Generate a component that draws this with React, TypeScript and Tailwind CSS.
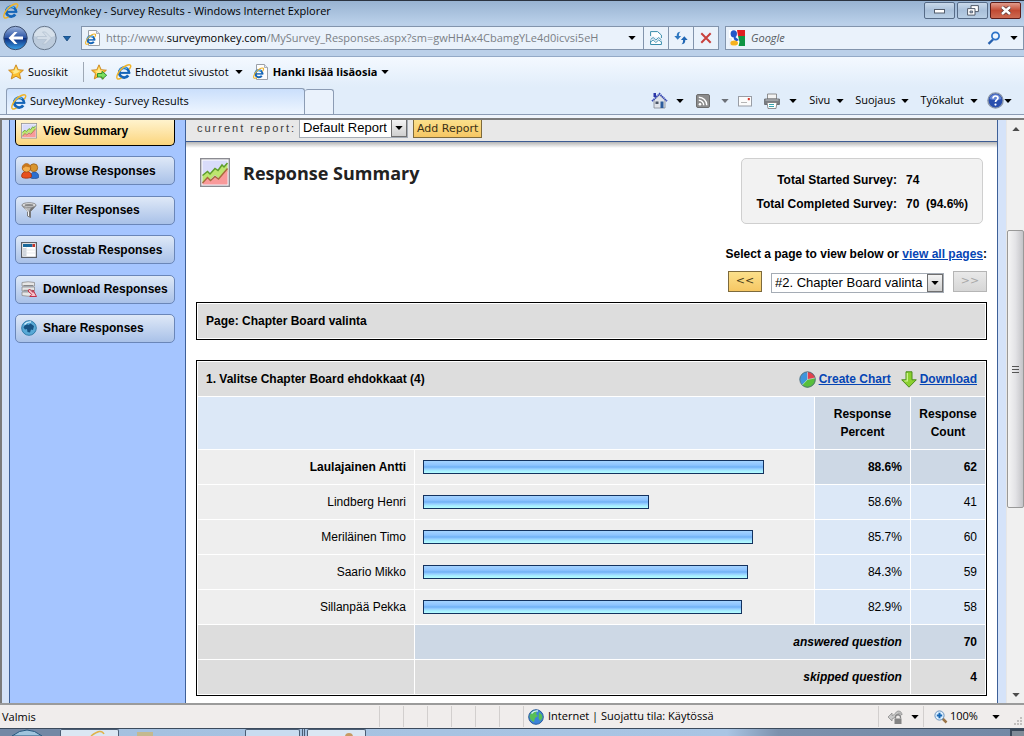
import React from "react";

const results = [
  { name: "Laulajainen Antti", percent: 88.6, count: 62, top: true },
  { name: "Lindberg Henri", percent: 58.6, count: 41, top: false },
  { name: "Meriläinen Timo", percent: 85.7, count: 60, top: false },
  { name: "Saario Mikko", percent: 84.3, count: 59, top: false },
  { name: "Sillanpää Pekka", percent: 82.9, count: 58, top: false },
];

function Caret({ className = "text-black" }: { className?: string }) {
  return (
    <svg width="8" height="4" viewBox="0 0 8 4" className={"shrink-0 " + className} aria-hidden="true">
      <path d="M0.3 0h7.4L4 4z" fill="currentColor" />
    </svg>
  );
}

function IeMark() {
  return (
    <>
      <path d="M13 9.2A4.9 4.9 0 1 0 12.2 11.4" fill="none" stroke="#1565b8" strokeWidth="2.8" />
      <path d="M4 8.9h10.2" stroke="#1565b8" strokeWidth="2" />
      <path d="M3.4 7.4A4.9 4.9 0 0 1 11 4.6" fill="none" stroke="#5cbcf2" strokeWidth="1.4" />
      <path d="M13.2 5.4c1.500-2 2-3.700 1.100-4.300C12.700 0 8.600 1.900 5.200 5.200c-3.600 3.600-5.300 8.100-3.900 9.400.8.700 2.500.3 4.200-.7" fill="none" stroke="#f0b429" strokeWidth="1.4" />
    </>
  );
}

function IeIcon() {
  return (
    <svg width="16" height="16" viewBox="0 0 16 16" className="shrink-0" aria-hidden="true">
      <IeMark />
    </svg>
  );
}

function IePageIcon() {
  return (
    <svg width="16" height="16" viewBox="0 0 16 16" className="shrink-0" aria-hidden="true">
      <path d="M3.5.5h8l3 3v12h-11z" fill="#fdfdfd" stroke="#9aa0a8" />
      <path d="M11.5.5v3h3" fill="#dfe5ec" stroke="#9aa0a8" strokeWidth=".8" />
      <g transform="translate(0 3.5) scale(.72)">
        <IeMark />
      </g>
    </svg>
  );
}

function StarIcon({ add = false }: { add?: boolean }) {
  return (
    <svg width="16" height="16" viewBox="0 0 16 16" className="shrink-0" aria-hidden="true">
      <path d="M8 .8l2.2 4.9 5.2.5-3.9 3.5 1.2 5.2L8 12.2l-4.700 2.700 1.200-5.200L.6 6.200l5.200-.5z" fill="#fbc02f" stroke="#c8831c" strokeWidth=".9" />
      <path d="M8 2.800l1.300 3.500 3 .5-2.600 2L8 9.500 5 10l.7-2-2.400-1.300 3.200-.2z" fill="#ffe88a" />
      {add && <path d="M6.500 9.500h4.500V7.300l4.700 4-4.700 4V13H6.500z" fill="#7be05e" stroke="#27882a" strokeWidth=".9" />}
    </svg>
  );
}

function ChartIcon({ size }: { size: number }) {
  return (
    <svg width={size} height={size} viewBox="0 0 30 30" className="shrink-0" aria-hidden="true">
      <rect x=".7" y=".7" width="28.6" height="27.6" fill="#fff" stroke="#8b8b92" strokeWidth="1.4" />
      <rect x="2.5" y="2.5" width="25" height="24" fill="#d9dcfa" />
      <path d="M2.5 17.5l5-4 2.500 2.500 5-5.500 3 2 4-5.500 2 2 3.500-4v9L18.500 20 15 17l-5 4.500-2.500-2-5 6z" fill="#bde56f" />
      <path d="M2.500 25l5-5.500 3 3 4.500-4 3.500 2.500 9-10.500v16h-25z" fill="#f99a9a" />
      <path d="M2.500 17.500l5-4 2.500 2.500 5-5.500 3 2 4-5.500 2 2 3.500-4" fill="none" stroke="#5f9d2b" strokeWidth="1.5" />
      <path d="M2.500 25l5-5.500 3 3 4.500-4 3.500 2.500 9-10.500" fill="none" stroke="#a66a3c" strokeWidth="1.4" />
    </svg>
  );
}

function PeopleIcon() {
  return (
    <svg width="18" height="16" viewBox="0 0 18 16" className="shrink-0" aria-hidden="true">
      <path d="M9.500 15c0-4 1-6 4-6s4.300 2.500 4.300 5c0 1.500-5 2-8.300 1z" fill="#2c6fd0" stroke="#1c4a94" strokeWidth=".7" />
      <circle cx="12.8" cy="4.7" r="3.9" fill="#d9962f" stroke="#99601a" strokeWidth=".8" />
      <path d="M.6 13.500C.6 10 2.500 8.500 5.600 8.500s5 1.500 5 5c0 2-10 2.500-10 0z" fill="#e8501f" stroke="#9f2e0c" strokeWidth=".8" />
      <circle cx="5.5" cy="4.9" r="4.2" fill="#f4b04e" stroke="#a65c16" strokeWidth=".9" />
      <path d="M1.400 5C1.500 1.500 4 .4 6 .7c2.500.3 3.700 2 3.700 4C8 4 6 3.600 4.500 3.400 3.500 4.500 2.500 5 1.400 5z" fill="#c8781e" />
    </svg>
  );
}

function FunnelIcon() {
  return (
    <svg width="16" height="16" viewBox="0 0 16 16" className="shrink-0" aria-hidden="true">
      <path d="M1 3.500l5.500 6V14l3 1.500v-6l5.500-6z" fill="#b5b5b5" stroke="#6b6b6b" strokeWidth=".8" />
      <path d="M9.500 15v-5.500l5-5.500-4.500 1.500-2 4v5z" fill="#747474" />
      <path d="M4 6.500L7.500 10v4" fill="none" stroke="#f4f4f4" />
      <ellipse cx="8" cy="3" rx="7" ry="2.3" fill="#e4e4e4" stroke="#7b7b7b" strokeWidth=".8" />
      <ellipse cx="8" cy="3.2" rx="4.5" ry="1.1" fill="#888" />
    </svg>
  );
}

function CrosstabIcon() {
  return (
    <svg width="16" height="16" viewBox="0 0 16 16" className="shrink-0" aria-hidden="true">
      <rect x=".6" y=".6" width="14.8" height="14.8" fill="#fff" stroke="#5b6068" strokeWidth="1.2" />
      <path d="M2 2h9.500v3H2z" fill="#1b6a9c" />
      <path d="M11.500 2H14v3h-2.500z" fill="#c5372c" />
      <path d="M2 6h3v8H2z" fill="#cfd5dc" />
      <path d="M5.500 5.500v8.500M2 8h12M2 11h12" stroke="#dde1e5" strokeWidth=".7" />
    </svg>
  );
}

function DatabaseIcon() {
  return (
    <svg width="16" height="16" viewBox="0 0 16 16" className="shrink-0" aria-hidden="true">
      <path d="M1 1.500Q7 0 13.500 1.500v3.500H1zM1 6h12.500v4H1zM1 11h12.500v3.500Q7 16 1 14.500z" fill="#e6e6e6" stroke="#8e8e8e" strokeWidth=".8" />
      <path d="M2.500 4.500H12M2.500 9.300H12" stroke="#777" strokeWidth=".8" />
      <path d="M8.500 8l3.500 3.500V9l3.500 6.500H8.800l2-2L7 10z" fill="#f7c4cc" stroke="#c01f3a" strokeWidth=".9" />
    </svg>
  );
}

function GlobeIcon({ green = false }: { green?: boolean }) {
  return (
    <svg width="16" height="16" viewBox="0 0 16 16" className="shrink-0" aria-hidden="true">
      <circle cx="8" cy="8" r="7.3" fill={green ? "#3b83d8" : "#58a9d6"} stroke={green ? "#2a5c9a" : "#327ca9"} />
      {green ? (
        <path d="M3 4c2-2.500 5-3 6-2L8 5l2 2-3 2-1 4C3 12 1.500 9 1.500 7zM11 3l3 3 .5 3-2.500 3-1.500-3z" fill="#57bf57" />
      ) : (
        <path d="M2.500 7.500c1-2.500 3.500-3.500 5-2.500l2-1.500L13 6l-1 4-2-.5-1 3-2.500-.5-.5-3-2 .5z" fill="#185383" />
      )}
      <path d="M3.500 4.500Q6 1.500 10 2" fill="none" stroke="#d5f0ff" strokeWidth="1.3" />
    </svg>
  );
}

function HomeIcon() {
  return (
    <svg width="17" height="17" viewBox="0 0 17 17" className="shrink-0" aria-hidden="true">
      <path d="M2.500 1h2.500v4H2.500z" fill="#2a35a8" />
      <path d="M3 8l5.500-5L14 8v8H3z" fill="#dfe3ea" stroke="#80858f" strokeWidth=".8" />
      <path d="M1 9.200L8.500 1.800 16 9.200" fill="none" stroke="#3747b4" strokeWidth="1.7" strokeDasharray="1.5 .5" />
      <path d="M9.500 9.500h3V16h-3z" fill="#2d5c9d" />
      <path d="M4.500 9.500h3V12h-3z" fill="#4b5566" />
    </svg>
  );
}

function RssIcon() {
  return (
    <svg width="14" height="14" viewBox="0 0 14 14" className="shrink-0" aria-hidden="true">
      <rect x=".5" y=".5" width="13" height="13" rx="1.5" fill="#8c8c8c" stroke="#6d6d6d" />
      <circle cx="4" cy="10.2" r="1.3" fill="#fff" />
      <path d="M2.800 6.300a4.900 4.900 0 0 1 4.900 4.900M2.800 3.200a8 8 0 0 1 8 8" fill="none" stroke="#fff" strokeWidth="1.4" />
    </svg>
  );
}

function MailIcon() {
  return (
    <svg width="14" height="12" viewBox="0 0 14 12" className="shrink-0" aria-hidden="true">
      <rect x=".5" y="1.5" width="13" height="9.5" fill="#fbfbfb" stroke="#999da5" />
      <path d="M9.800 3h2v2.200h-2z" fill="#d8362b" />
      <path d="M3 7.500h6" stroke="#b5b5b5" />
    </svg>
  );
}

function PrinterIcon() {
  return (
    <svg width="16" height="16" viewBox="0 0 16 16" className="shrink-0" aria-hidden="true">
      <path d="M3.500 1h9v5h-9z" fill="#f3f3f3" stroke="#777" strokeWidth=".8" />
      <path d="M.6 6h14.800v5.500H.6z" fill="#7b7e83" stroke="#5a5d62" strokeWidth=".8" />
      <path d="M3 9.500h10l-1 6H4z" fill="#fff" stroke="#777" strokeWidth=".8" />
      <path d="M5 11.500h5M5 13.500h5" stroke="#39a4b0" />
      <path d="M1.500 7h13" stroke="#c4c7cb" />
    </svg>
  );
}

function HelpIcon() {
  return (
    <svg width="17" height="17" viewBox="0 0 17 17" className="shrink-0" aria-hidden="true">
      <circle cx="8.5" cy="8.5" r="7.6" fill="#2a4fae" stroke="#8c98ab" strokeWidth="1.4" />
      <path d="M2.500 7a6.200 6.200 0 0 1 12 0Q8 9 2.500 7z" fill="#6384d4" />
      <path d="M6 6.500c0-3.300 5-3.200 5-.4 0 1.900-2.500 1.800-2.500 4" fill="none" stroke="#fff" strokeWidth="1.7" />
      <circle cx="8.5" cy="12.6" r="1.1" fill="#fff" />
    </svg>
  );
}

function GoogleIcon() {
  return (
    <svg width="16" height="16" viewBox="0 0 16 16" className="shrink-0" aria-hidden="true">
      <path d="M0 0h16v16H0z" fill="#fff" />
      <path d="M8 0h8v6H9z" fill="#e01f22" />
      <path d="M9 6h7v10H9.500l1-4z" fill="#109544" />
      <path d="M0 8h3v8H0z" fill="#e8ecf4" />
      <ellipse cx="4.8" cy="3.8" rx="3.2" ry="3.6" fill="#2456c8" />
      <path d="M5 7c3 0 3 2 5 3l-2 1C6 11 4 9 5 7z" fill="#2456c8" />
      <ellipse cx="5.2" cy="13" rx="3.8" ry="2.6" fill="#f5b21f" />
    </svg>
  );
}

function PieIcon() {
  return (
    <svg width="17" height="17" viewBox="0 0 17 17" className="shrink-0" aria-hidden="true">
      <circle cx="8.5" cy="8.5" r="7.8" fill="#3f95dc" />
      <path d="M8.500 8.500V.7a7.800 7.800 0 0 1 7.800 6.300z" fill="#e2414d" />
      <path d="M8.500 8.500L16.300 7A7.800 7.800 0 0 1 3 14z" fill="#57bf3b" />
      <circle cx="8.5" cy="8.5" r="7.7" fill="none" stroke="#54707b" strokeWidth=".9" />
      <path d="M8.500 8.500V1M8.500 8.500L16 7M8.500 8.500L3.300 14" stroke="#e8f4f4" strokeWidth=".5" />
    </svg>
  );
}

function DownloadIcon() {
  return (
    <svg width="16" height="17" viewBox="0 0 16 17" className="shrink-0" aria-hidden="true">
      <path d="M5 .8h6v8h4.300L8 16.200.7 8.800H5z" fill="#8bd02f" stroke="#4b8d1b" />
      <path d="M6.300 2v8H3.500" fill="none" stroke="#d3f596" strokeWidth="1.2" />
    </svg>
  );
}

function SideButton({ icon, label }: { icon: React.ReactNode; label: string }) {
  return (
    <button className="flex h-[29px] w-full items-center gap-[6px] rounded-[5px] border border-[#6a86b8] bg-gradient-to-b from-[#dfe9f7] to-[#a9c1e8] px-[5px] text-left text-[12px] font-bold text-black">
      {icon}
      {label}
    </button>
  );
}

function MenuButton({ label }: { label: string }) {
  return (
    <button className="flex items-center gap-[6px]">
      {label}
      <Caret />
    </button>
  );
}

function SelectBox({ id, label, value }: { id: string; label: string; value: string }) {
  return (
    <span className="relative inline-flex">
      <select
        id={id}
        aria-label={label}
        defaultValue={value}
        className="h-5 appearance-none border border-[#a5acb5] bg-white pr-5 pl-[3px] font-['Liberation_Sans',sans-serif] text-[13px] leading-[18px] text-black"
      >
        <option>{value}</option>
      </select>
      <span className="pointer-events-none absolute top-px right-px bottom-px flex w-4 items-center justify-center border border-[#6f6f6f] bg-gradient-to-b from-[#f4f4f4] to-[#cfcfcf]">
        <Caret />
      </span>
    </span>
  );
}

function TitleBar() {
  return (
    <header className="flex h-6 items-start border-t border-[#2b3340] bg-gradient-to-b from-[#98b3d2] to-[#bbd1ea] pr-[3px] pl-[3px]">
      <div className="flex h-5 flex-1 items-center gap-[7px]">
        <IeIcon />
        <h1 className="text-[11px]">SurveyMonkey - Survey Results - Windows Internet Explorer</h1>
      </div>
      <div className="flex gap-[2px] pt-px">
        <button aria-label="Minimize" className="flex h-[17px] w-[31px] items-center justify-center rounded-[2px] border border-[#566b87] bg-gradient-to-b from-[#c9d9ea] via-[#a9c0da] to-[#b9cfe5]">
          <svg width="12" height="6" viewBox="0 0 12 6"><rect x=".5" y="1.5" width="10" height="3.5" fill="#fff" stroke="#525c6b" /></svg>
        </button>
        <button aria-label="Restore" className="flex h-[17px] w-[31px] items-center justify-center rounded-[2px] border border-[#566b87] bg-gradient-to-b from-[#c9d9ea] via-[#a9c0da] to-[#b9cfe5]">
          <svg width="12" height="11" viewBox="0 0 12 11">
            <path d="M4 .6h7.400v6H4z" fill="#fff" stroke="#525c6b" />
            <path d="M.6 3.600h7.400v6.500H.6z" fill="#fff" stroke="#525c6b" />
            <path d="M3 6h2.600v1.800H3z" fill="#a9c0da" stroke="#525c6b" strokeWidth=".9" />
          </svg>
        </button>
        <button aria-label="Close" className="flex h-[17px] w-[31px] items-center justify-center rounded-[2px] border border-[#5d1d1a] bg-gradient-to-b from-[#e19b8c] via-[#c14a33] to-[#cd6a52]">
          <svg width="12" height="9" viewBox="0 0 12 9">
            <path d="M2 1l8 7M10 1L2 8" stroke="#5a3434" strokeWidth="4" />
            <path d="M2 1l8 7M10 1L2 8" stroke="#fff" strokeWidth="2.5" />
          </svg>
        </button>
      </div>
    </header>
  );
}

function NavBar() {
  return (
    <div className="flex h-8 items-start bg-[#bbd0e9] pl-[3px] text-[11px]">
      <div className="flex h-7 w-[78px] shrink-0 items-center">
        <button aria-label="Back">
          <svg width="26" height="26" viewBox="0 0 26 26">
            <defs>
              <linearGradient id="back" x1="0" y1="0" x2="0" y2="1">
                <stop offset="0" stopColor="#9db4dc" />
                <stop offset=".48" stopColor="#2c55a5" />
                <stop offset=".52" stopColor="#0e2f80" />
                <stop offset="1" stopColor="#3aa2ea" />
              </linearGradient>
            </defs>
            <circle cx="12.5" cy="13" r="11.7" fill="url(#back)" stroke="#3b4d6d" />
            <path d="M5.500 13l6-6h3l-4 4.500H20v3h-9.500l4 4.500h-3z" fill="#fff" />
          </svg>
        </button>
        <button aria-label="Forward" className="ml-[3px]">
          <svg width="26" height="26" viewBox="0 0 26 26">
            <circle cx="12.5" cy="13" r="11.7" fill="#bccbdc" stroke="#69798d" />
            <path d="M2 11a10.700 10.700 0 0 1 21 0q-10 4-21 0z" fill="#d6e0ea" />
            <path d="M19.500 13l-6-6h-3l4 4.500H5v3h9.500l-4 4.500h3z" fill="#d3dde8" stroke="#b0bfcf" strokeWidth=".7" />
          </svg>
        </button>
        <button aria-label="Recent pages" className="ml-[5px]">
          <svg width="8" height="5" viewBox="0 0 8 5"><path d="M.3 0h7.400L4 5z" fill="#1d63a8" stroke="#123f70" strokeWidth=".7" /></svg>
        </button>
      </div>
      <div className="mt-[2px] flex h-6 min-w-0 flex-1 items-center border border-[#8294ac] bg-[#eaf2fb] pl-[3px]">
        <IePageIcon />
        <div
          role="textbox"
          aria-label="Address"
          contentEditable
          suppressContentEditableWarning
          className="ml-[5px] min-w-0 flex-1 overflow-hidden whitespace-nowrap text-[#7a7f86]"
        >
          http://www.<span className="text-black">surveymonkey.com</span>/MySurvey_Responses.aspx?sm=gwHHAx4CbamgYLe4d0icvsi5eH
        </div>
        <button aria-label="Address history" className="flex h-full w-[22px] items-center justify-center"><Caret /></button>
        <button aria-label="Compatibility view" className="flex h-full w-[25px] items-center justify-center border-l border-[#8294ac]">
          <svg width="12" height="14" viewBox="0 0 12 14">
            <path d="M.6 5V.6h7l3.800 3.500V7M.6 9.500v4h10.800v-3" fill="#fff" stroke="#398cab" />
            <path d="M.6 8.500l2.500-2 2.800 2.500 2.800-2.500 2.700 2.500M.6 11l2.500-2 2.800 2.500 2.800-2.500 2.700 2" fill="none" stroke="#398cab" strokeWidth=".9" />
          </svg>
        </button>
        <button aria-label="Refresh" className="flex h-full w-[25px] items-center justify-center border-l border-[#8294ac]">
          <svg width="14" height="14" viewBox="0 0 14 14">
            <path d="M6.500.8C4 .8 2.700 2 2.700 5H.3L3.700 8.700 7.100 5H4.900c0-2 .3-3.200 1.600-4.200z" fill="#2f78c0" />
            <path d="M7.500 13.200c2.500 0 3.800-1.200 3.800-4.200h2.400l-3.400-3.700L6.900 9h2.200c0 2-.3 3.200-1.600 4.200z" fill="#1f66b4" />
          </svg>
        </button>
        <button aria-label="Stop" className="flex h-full w-[25px] items-center justify-center border-l border-[#8294ac]">
          <svg width="12" height="12" viewBox="0 0 12 12"><path d="M1.300 1.300l9.400 9.400M10.700 1.300l-9.400 9.400" stroke="#c8403c" strokeWidth="2" /></svg>
        </button>
      </div>
      <div className="mt-[2px] ml-[6px] flex h-6 w-[299px] shrink-0 items-center border border-[#8294ac] bg-[#eaf2fb] pr-[5px] pl-[3px]">
        <GoogleIcon />
        <input aria-label="Search" placeholder="Google" className="ml-[6px] min-w-0 flex-1 bg-transparent italic outline-none placeholder:text-[#555a61]" />
        <button aria-label="Run search">
          <svg width="14" height="14" viewBox="0 0 14 14">
            <path d="M6 8.500L1.500 12.800" stroke="#2660ae" strokeWidth="2.3" />
            <circle cx="8.5" cy="5" r="3.6" fill="#eef6ff" stroke="#2b72c8" strokeWidth="1.7" />
          </svg>
        </button>
        <button aria-label="Search options" className="ml-[9px]"><Caret /></button>
      </div>
    </div>
  );
}

function FavoritesBar() {
  return (
    <nav className="flex h-[31px] items-center border-t border-[#93a9c6] bg-gradient-to-b from-[#f4f9ff] to-[#e1edfa] pl-2 text-[11px]">
      <button className="flex items-center gap-1"><StarIcon />Suosikit</button>
      <span className="ml-[15px] h-5 w-px bg-[#9ea8b5]" />
      <button aria-label="Add to favorites" className="ml-[7px]"><StarIcon add /></button>
      <button className="ml-[9px] flex items-center gap-[3px]"><IeIcon />Ehdotetut sivustot<Caret className="ml-[3px] text-black" /></button>
      <button className="ml-[10px] flex items-center gap-1 font-bold"><IePageIcon />Hanki lisää lisäosia<Caret className="text-black" /></button>
    </nav>
  );
}

function TabBar() {
  return (
    <div className="flex h-8 flex-col bg-[#e1edfa] text-[11px]">
      <div className="flex flex-1 items-stretch border-b border-[#8c9cb4] pl-[6px]">
        <div className="mt-px flex w-[299px] items-center gap-[3px] rounded-t-[3px] border border-b-0 border-[#8c9cb4] bg-gradient-to-b from-[#cadffb] to-[#eff6ff] pl-1">
          <IeIcon />
          <span>SurveyMonkey - Survey Results</span>
        </div>
        <button aria-label="New tab" className="mt-[2px] w-[29px] rounded-t-[3px] border border-b-0 border-l-0 border-[#8c9cb4] bg-[#eaf2fc]" />
        <div className="flex flex-1 items-center justify-end pr-3">
          <button aria-label="Home"><HomeIcon /></button>
          <button aria-label="Home options" className="ml-2"><Caret /></button>
          <button aria-label="Feeds" className="ml-3"><RssIcon /></button>
          <button aria-label="Feed options" className="ml-[11px]"><Caret className="text-[#6c7077]" /></button>
          <button aria-label="Read mail" className="ml-[9px]"><MailIcon /></button>
          <button aria-label="Print" className="ml-3"><PrinterIcon /></button>
          <button aria-label="Print options" className="ml-[9px]"><Caret /></button>
          <div className="ml-3 flex gap-[11px]">
            <MenuButton label="Sivu" />
            <MenuButton label="Suojaus" />
            <MenuButton label="Työkalut" />
          </div>
          <button aria-label="Help" className="ml-[9px] flex items-center"><HelpIcon /><Caret /></button>
        </div>
      </div>
      <div className="h-[4px] border-b border-[#7c7c7c] bg-[#f0f5fc]" />
    </div>
  );
}

function Sidebar() {
  return (
    <aside className="w-[177px] shrink-0 border-x border-[#3e6098] bg-[#a5c5ff] pr-[10px] pl-[5px]">
      <div className="flex h-[223px] flex-col justify-between">
        <button className="flex h-[26px] w-full items-center gap-[6px] rounded-b-[5px] border border-t-0 border-black bg-gradient-to-b from-[#fff3cd] to-[#fbd57c] px-[5px] pb-1 text-left text-[12px] font-bold">
          <ChartIcon size={16} />
          View Summary
        </button>
        <SideButton icon={<PeopleIcon />} label="Browse Responses" />
        <SideButton icon={<FunnelIcon />} label="Filter Responses" />
        <SideButton icon={<CrosstabIcon />} label="Crosstab Responses" />
        <SideButton icon={<DatabaseIcon />} label="Download Responses" />
        <SideButton icon={<GlobeIcon />} label="Share Responses" />
      </div>
    </aside>
  );
}

function ResultsTable() {
  return (
    <table className="mt-5 w-full table-fixed border-separate border-spacing-px border border-black bg-white text-[12px]">
      <colgroup>
        <col className="w-[216px]" />
        <col />
        <col className="w-[95px]" />
        <col className="w-[74px]" />
      </colgroup>
      <thead>
        <tr className="h-[34px] bg-[#dddddd]">
          <th colSpan={4} className="px-2 text-left font-bold">
            <div className="flex items-center">
              <span className="flex-1">1. Valitse Chapter Board ehdokkaat (4)</span>
              <a href="#chart" className="flex items-center gap-[3px] text-[#0645b4] underline"><PieIcon />Create Chart</a>
              <a href="#download" className="ml-[10px] flex items-center gap-[3px] text-[#0645b4] underline"><DownloadIcon />Download</a>
            </div>
          </th>
        </tr>
        <tr className="h-[52px] leading-[18px]">
          <td colSpan={2} className="bg-[#dce8f7]" />
          <th scope="col" className="bg-[#cdd8e5]">Response<br />Percent</th>
          <th scope="col" className="bg-[#cdd8e5]">Response<br />Count</th>
        </tr>
      </thead>
      <tbody>
        {results.map((r) => (
          <tr key={r.name} className={r.top ? "h-[34px] font-bold" : "h-[34px]"}>
            <th scope="row" className={r.top ? "bg-[#eeeeee] px-2 text-right font-bold" : "bg-[#eeeeee] px-2 text-right font-normal"}>{r.name}</th>
            <td className="bg-[#eeeeee] pr-[6px] pl-2">
              <div
                className="h-[14px] border border-[#14325f] bg-[linear-gradient(to_bottom,#a5d3ff_0%,#8cc3ff_35%,#6fb0f5_50%,#8fc8ff_62%,#a5eaff_80%,#b5ffff_100%)]"
                style={{ width: `${r.percent}%` }}
              />
            </td>
            <td className={r.top ? "bg-[#cdd8e5] px-2 text-right" : "bg-[#dce8f7] px-2 text-right"}>{r.percent}%</td>
            <td className={r.top ? "bg-[#cdd8e5] px-2 text-right" : "bg-[#dce8f7] px-2 text-right"}>{r.count}</td>
          </tr>
        ))}
      </tbody>
      <tfoot>
        <tr className="h-[34px] font-bold">
          <td className="bg-[#dddddd]" />
          <th scope="row" colSpan={2} className="bg-[#cdd8e5] px-2 text-right italic">answered question</th>
          <td className="bg-[#cdd8e5] px-2 text-right">70</td>
        </tr>
        <tr className="h-[34px] font-bold">
          <td className="bg-[#dddddd]" />
          <th scope="row" colSpan={2} className="bg-[#dddddd] px-2 text-right italic">skipped question</th>
          <td className="bg-[#dddddd] px-2 text-right">4</td>
        </tr>
      </tfoot>
    </table>
  );
}

function Report() {
  return (
    <main className="min-w-0 flex-1 border-r border-[#3e6098] bg-white">
      <div className="flex h-[22px] items-start border-b border-[#3e5c92] bg-[#e8e8e8] pl-[11px]">
        <label htmlFor="report" className="w-[102px] text-[11px] leading-4 tracking-[2px] whitespace-nowrap text-[#3b3b3b]">current report:</label>
        <div className="-mt-[2px] flex"><SelectBox id="report" label="Current report" value="Default Report" /></div>
        <button className="ml-[5px] h-[18px] border border-t-0 border-[#7d6a3c] bg-gradient-to-b from-[#fbe08b] to-[#f6c763] px-[3px] font-['DejaVu_Sans',sans-serif] text-[11px] leading-[17px] text-[#3a3217]">Add Report</button>
      </div>
      <div className="h-[6px] bg-gradient-to-b from-[#b5b5b5] to-white" />
      <div className="px-[10px] pt-[10px] pb-[7px] text-[12px]">
        <div className="flex items-start pr-1 pl-1">
          <ChartIcon size={30} />
          <h2 className="ml-[13px] flex-1 font-['Open_Sans',sans-serif] text-[18px] leading-[30px] font-bold text-[#222]">Response Summary</h2>
          <dl className="grid grid-cols-[auto_auto] gap-x-[9px] rounded-[5px] border border-[#cfcfcf] bg-[#f2f2f2] px-[14px] pt-[9px] pb-[7px] leading-6 font-bold">
            <dt className="text-right">Total Started Survey:</dt>
            <dd>74</dd>
            <dt className="text-right">Total Completed Survey:</dt>
            <dd>70 &nbsp;(94.6%)</dd>
          </dl>
        </div>
        <p className="mt-[22px] text-right leading-4 font-bold">
          Select a page to view below or <a href="#all" className="text-[#0645b4] underline">view all pages</a>:
        </p>
        <div className="mt-[9px] flex items-start justify-end gap-[9px] font-['DejaVu_Sans',sans-serif] text-[11px]">
          <button aria-label="Previous page" className="h-[21px] w-[34px] border border-[#7d6a3c] bg-gradient-to-b from-[#fbe08b] to-[#f6c763] text-[#4a3d18]">&lt;&lt;</button>
          <span className="mt-[2px] flex"><SelectBox id="page" label="Page" value="#2. Chapter Board valinta" /></span>
          <button aria-label="Next page" disabled className="h-[21px] w-[34px] border border-[#b5b5b5] bg-gradient-to-b from-[#e9e9e9] to-[#d6d6d6] text-[#a8a8a8]">&gt;&gt;</button>
        </div>
        <div className="mt-[9px] border border-black p-px">
          <h3 className="bg-[#dddddd] px-2 leading-[34px] font-bold">Page: Chapter Board valinta</h3>
        </div>
        <ResultsTable />
      </div>
    </main>
  );
}

function ScrollBar() {
  return (
    <div className="flex w-[18px] shrink-0 flex-col border-l border-[#e6e6e6] bg-[#f0f0f0]">
      <button aria-label="Scroll up" className="flex h-[17px] items-center justify-center">
        <Caret className="rotate-180 text-[#4c4c4c]" />
      </button>
      <div className="flex-[93]" />
      <div className="flex min-h-[278px] flex-col items-center justify-center gap-[2px] rounded-[2px] border border-[#999] bg-gradient-to-r from-[#f5f5f5] via-[#e3e3e6] to-[#c4c4c8]">
        <span className="h-px w-[7px] bg-[#555]" />
        <span className="h-px w-[7px] bg-[#555]" />
        <span className="h-px w-[7px] bg-[#555]" />
      </div>
      <div className="flex-[178]" />
      <button aria-label="Scroll down" className="flex h-[17px] items-center justify-center">
        <Caret className="text-[#4c4c4c]" />
      </button>
    </div>
  );
}

function StatusBar() {
  return (
    <footer className="flex h-[25px] items-stretch border-t-2 border-[#9b9b9b] bg-[#f0edec] pt-px text-[11px]">
      <div className="flex flex-1 items-center pl-[2px]">Valmis</div>
      {[0, 1, 2, 3, 4, 5].map((n) => (
        <span key={n} className="mb-px w-6 border-l border-[#d2cfce]" />
      ))}
      <div className="mb-px flex w-[355px] items-center gap-1 border-l border-[#d2cfce] pl-1">
        <GlobeIcon green />
        Internet | Suojattu tila: Käytössä
      </div>
      <button aria-label="Protected mode" className="mb-px flex w-[45px] items-center gap-2 border-l border-[#d2cfce] pl-2">
        <svg width="16" height="16" viewBox="0 0 16 16">
          <path d="M1 8l4-4v2.500c3 0 3.500-4 6-4.500 3 0 4 2 4 4l-3-2c-3 1-3 5-7 6v2z" fill="#c8c8c8" stroke="#8d8d8d" strokeWidth=".8" />
          <path d="M8.500 9.500V8c0-3 5-3 5 0v1.500" fill="none" stroke="#858585" strokeWidth="1.3" />
          <path d="M7.500 9.500h7V15h-7z" fill="#838383" />
        </svg>
        <Caret />
      </button>
      <button className="mb-px flex w-[101px] items-center border-l border-[#d2cfce] pl-[10px]">
        <svg width="14" height="14" viewBox="0 0 14 14">
          <path d="M8 8l4.500 4.500" stroke="#9a7447" strokeWidth="2.5" />
          <circle cx="5.5" cy="5.5" r="4.6" fill="#dff0ff" stroke="#6a93bd" />
          <path d="M5.500 2.800v5.400M2.800 5.500h5.400" stroke="#1767b5" strokeWidth="2" />
        </svg>
        <span className="flex-1 pl-[2px] text-left">100%</span>
        <Caret />
        <svg width="12" height="12" viewBox="0 0 12 12" className="ml-[12px] self-end">
          <path d="M8 2h2v2H8zM8 5h2v2H8zM8 8h2v2H8zM5 5h2v2H5zM5 8h2v2H5zM2 8h2v2H2z" fill="#c2bfbe" />
        </svg>
      </button>
    </footer>
  );
}

function TaskBar() {
  return (
    <div className="flex h-2 items-stretch border-t border-[#3b4a5c] bg-[linear-gradient(to_right,#a4c0df_0%,#a9c5e4_71%,#7c91ad_76%,#7388a5_100%)]">
      <div className="flex w-[60px] justify-start bg-[#7388a5] pl-3">
        <svg width="30" height="7" viewBox="0 0 30 7"><path d="M0 7Q15-5 30 7z" fill="#9fc4dd" stroke="#27577e" /></svg>
      </div>
      <div className="flex w-[59px] justify-center rounded-t-[2px] border border-b-0 border-[#4b5d74] bg-[#dbe7f3] pl-4">
        <svg width="18" height="6" viewBox="0 0 18 6"><path d="M2 6Q12-2 15 4" fill="none" stroke="#e0b24a" strokeWidth="1.5" /></svg>
      </div>
      <div className="w-[126px] pt-[3px] pl-[18px]"><div className="h-1 w-4 bg-[#c4b98f]" /></div>
      <div className="w-[55px] rounded-t-[2px] border border-b-0 border-[#4b5d74] bg-[#c9dcf0]" />
      <div className="ml-[2px] w-[3px] border-x border-[#4b5d74]" />
      <div className="ml-[2px] flex w-[59px] justify-center rounded-t-[2px] border border-b-0 border-[#4b5d74] bg-[#dbe7f3] pt-[3px] pl-6">
        <div className="h-1 w-2 rounded-t bg-[#c79a62]" />
      </div>
      <div className="flex-1" />
      <div className="w-[14px] border-2 border-r-0 border-b-0 border-[#39485a] bg-[#7f8b98]" />
    </div>
  );
}

export default function App() {
  return (
    <div className="flex min-h-screen flex-col bg-[#e1edfa] font-['Open_Sans','Noto_Sans',sans-serif] text-black">
      <TitleBar />
      <NavBar />
      <FavoritesBar />
      <TabBar />
      <div className="flex flex-1 items-stretch overflow-hidden border-t border-l-2 border-[#7c7c7c] bg-[#d5e3f9] font-['Liberation_Sans',Arial,sans-serif]">
        <div className="w-[7px] shrink-0" />
        <Sidebar />
        <Report />
        <div className="w-2 shrink-0" />
        <ScrollBar />
      </div>
      <StatusBar />
      <TaskBar />
    </div>
  );
}
